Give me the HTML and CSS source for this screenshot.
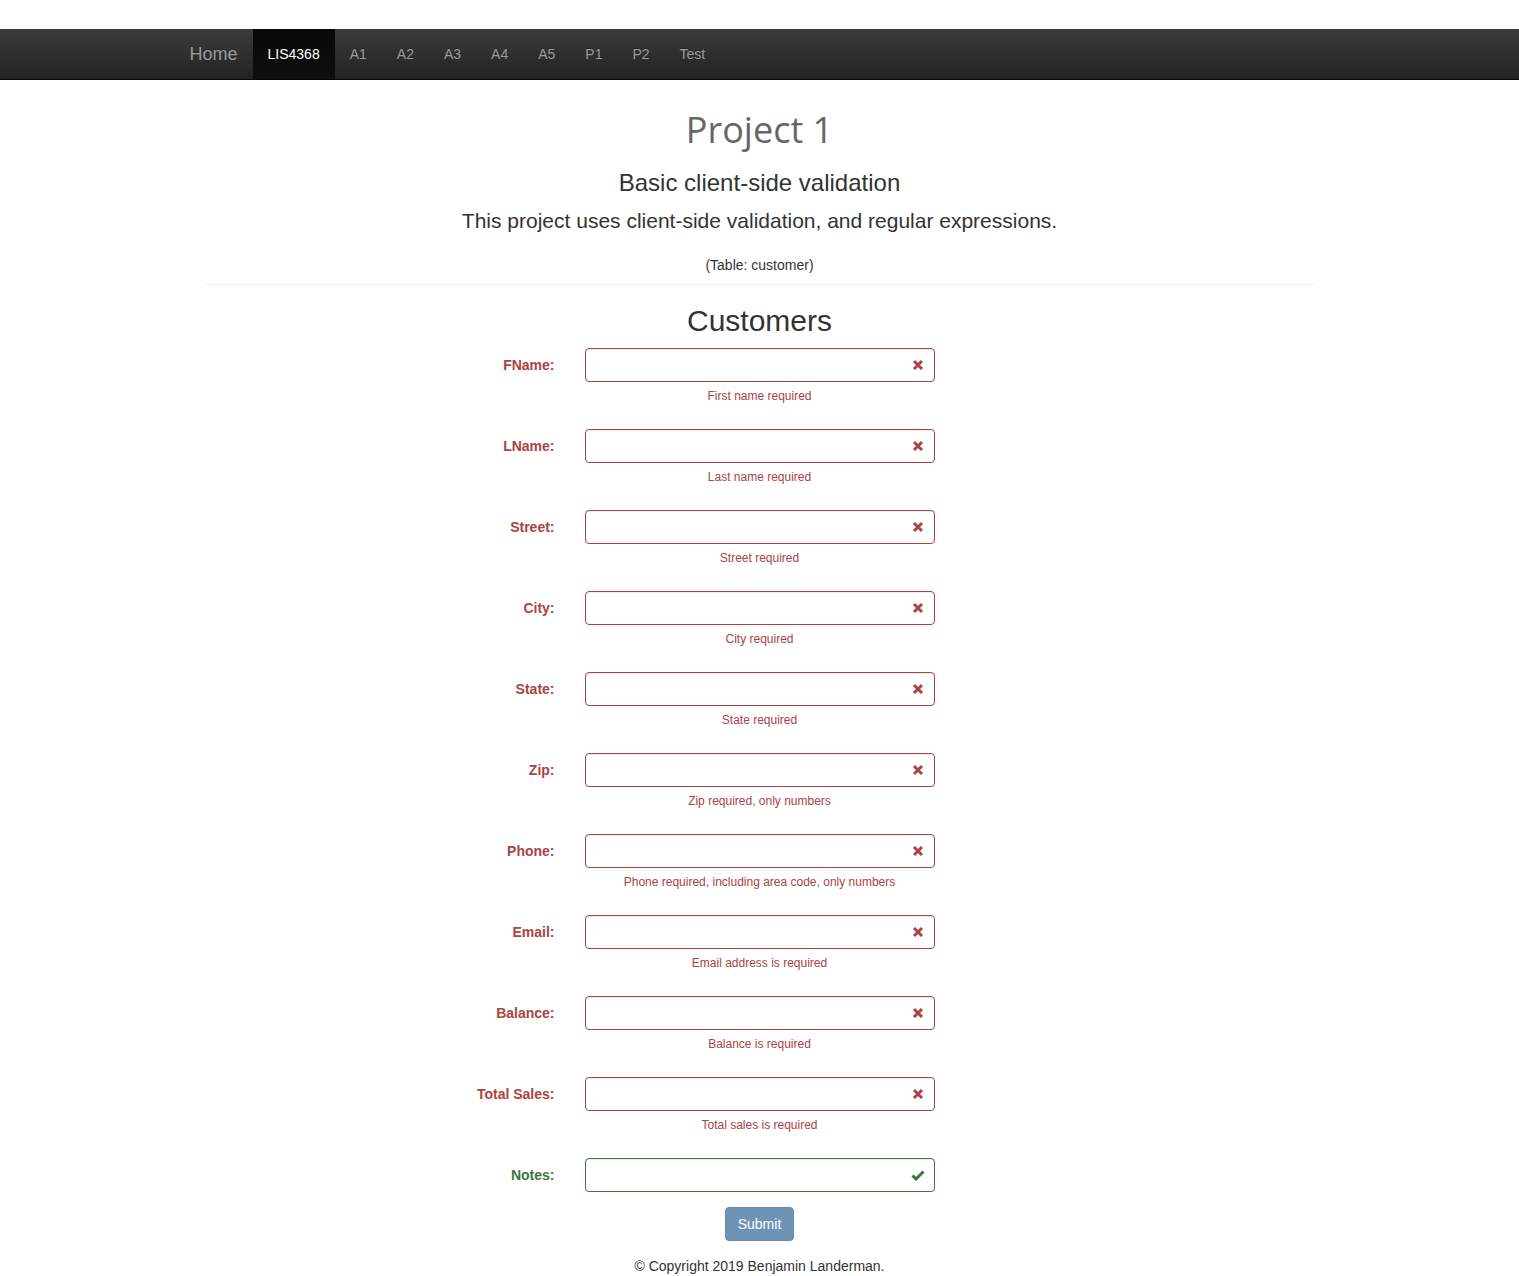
FILE: index.html
```html
<!DOCTYPE html>
<html lang="en">
<head>
<meta charset="utf-8">
<title>Project 1</title>
<link rel="stylesheet" href="styles.css">
</head>
<body>
<div class="topgap"></div>
<nav class="navbar">
  <div class="container nav-inner">
    <a class="brand" href="#">Home</a>
    <ul class="nav">
      <li class="active"><a href="#">LIS4368</a></li>
      <li><a href="#">A1</a></li>
      <li><a href="#">A2</a></li>
      <li><a href="#">A3</a></li>
      <li><a href="#">A4</a></li>
      <li><a href="#">A5</a></li>
      <li><a href="#">P1</a></li>
      <li><a href="#">P2</a></li>
      <li><a href="#">Test</a></li>
    </ul>
  </div>
</nav>

<div class="container">
  <div class="inner">
    <div class="page-header">
      <h1 class="title">Project 1</h1>
      <h3 class="subtitle">Basic client-side validation</h3>
      <p class="lead">This project uses client-side validation, and regular expressions.</p>
      <p class="table-note">(Table: customer)</p>
    </div>

    <h2 class="customers">Customers</h2>

    <form class="form">
      <div class="group error">
        <label class="label">FName:</label>
        <div class="field">
          <div class="control"><input type="text"><span class="icon"><svg viewBox="0 0 12 12" width="12" height="12"><path d="M2 2L10 10M10 2L2 10" stroke="#a94442" stroke-width="3"/></svg></span></div>
          <div class="help">First name required</div>
        </div>
      </div>
      <div class="group error">
        <label class="label">LName:</label>
        <div class="field">
          <div class="control"><input type="text"><span class="icon"><svg viewBox="0 0 12 12" width="12" height="12"><path d="M2 2L10 10M10 2L2 10" stroke="#a94442" stroke-width="3"/></svg></span></div>
          <div class="help">Last name required</div>
        </div>
      </div>
      <div class="group error">
        <label class="label">Street:</label>
        <div class="field">
          <div class="control"><input type="text"><span class="icon"><svg viewBox="0 0 12 12" width="12" height="12"><path d="M2 2L10 10M10 2L2 10" stroke="#a94442" stroke-width="3"/></svg></span></div>
          <div class="help">Street required</div>
        </div>
      </div>
      <div class="group error">
        <label class="label">City:</label>
        <div class="field">
          <div class="control"><input type="text"><span class="icon"><svg viewBox="0 0 12 12" width="12" height="12"><path d="M2 2L10 10M10 2L2 10" stroke="#a94442" stroke-width="3"/></svg></span></div>
          <div class="help">City required</div>
        </div>
      </div>
      <div class="group error">
        <label class="label">State:</label>
        <div class="field">
          <div class="control"><input type="text"><span class="icon"><svg viewBox="0 0 12 12" width="12" height="12"><path d="M2 2L10 10M10 2L2 10" stroke="#a94442" stroke-width="3"/></svg></span></div>
          <div class="help">State required</div>
        </div>
      </div>
      <div class="group error">
        <label class="label">Zip:</label>
        <div class="field">
          <div class="control"><input type="text"><span class="icon"><svg viewBox="0 0 12 12" width="12" height="12"><path d="M2 2L10 10M10 2L2 10" stroke="#a94442" stroke-width="3"/></svg></span></div>
          <div class="help">Zip required, only numbers</div>
        </div>
      </div>
      <div class="group error">
        <label class="label">Phone:</label>
        <div class="field">
          <div class="control"><input type="text"><span class="icon"><svg viewBox="0 0 12 12" width="12" height="12"><path d="M2 2L10 10M10 2L2 10" stroke="#a94442" stroke-width="3"/></svg></span></div>
          <div class="help">Phone required, including area code, only numbers</div>
        </div>
      </div>
      <div class="group error">
        <label class="label">Email:</label>
        <div class="field">
          <div class="control"><input type="text"><span class="icon"><svg viewBox="0 0 12 12" width="12" height="12"><path d="M2 2L10 10M10 2L2 10" stroke="#a94442" stroke-width="3"/></svg></span></div>
          <div class="help">Email address is required</div>
        </div>
      </div>
      <div class="group error">
        <label class="label">Balance:</label>
        <div class="field">
          <div class="control"><input type="text"><span class="icon"><svg viewBox="0 0 12 12" width="12" height="12"><path d="M2 2L10 10M10 2L2 10" stroke="#a94442" stroke-width="3"/></svg></span></div>
          <div class="help">Balance is required</div>
        </div>
      </div>
      <div class="group error">
        <label class="label">Total Sales:</label>
        <div class="field">
          <div class="control"><input type="text"><span class="icon"><svg viewBox="0 0 12 12" width="12" height="12"><path d="M2 2L10 10M10 2L2 10" stroke="#a94442" stroke-width="3"/></svg></span></div>
          <div class="help">Total sales is required</div>
        </div>
      </div>
      <div class="group success last">
        <label class="label">Notes:</label>
        <div class="field">
          <div class="control"><input type="text"><span class="icon"><svg viewBox="0 0 14 12" width="14" height="12"><path d="M1.5 6.5L5 10L12.5 2.5" stroke="#3c763d" stroke-width="3" fill="none"/></svg></span></div>
        </div>
      </div>
      <div class="submit-row">
        <button type="button" class="btn">Submit</button>
      </div>
    </form>

    <footer class="footer">© Copyright 2019 Benjamin Landerman.</footer>
  </div>
</div>
</body>
</html>
```

FILE: styles.css
```css
* { box-sizing: border-box; }
html, body { margin: 0; padding: 0; }
body {
  font-family: "Liberation Sans", Arial, sans-serif;
  font-size: 14px;
  line-height: 1.42857;
  color: #333;
  background: #fff;
}
.topgap { height: 29px; }
.container {
  width: 1170px;
  margin: 0 auto;
  padding: 0 15px;
}
.navbar {
  height: 51px;
  background: linear-gradient(to bottom, #3c3c3c 0%, #222 100%);
  border-bottom: 1px solid #080808;
}
.nav-inner { display: flex; align-items: stretch; height: 50px; }
.brand {
  display: block;
  padding: 15px 15px 15px 0;
  font-size: 18px;
  line-height: 20px;
  color: #9d9d9d;
  text-decoration: none;
  text-shadow: 0 -1px 0 rgba(0,0,0,.25);
}
.nav { list-style: none; margin: 0; padding: 0; display: flex; }
.nav li a {
  display: block;
  padding: 15px;
  line-height: 20px;
  font-size: 14px;
  color: #9d9d9d;
  text-decoration: none;
  text-shadow: 0 -1px 0 rgba(0,0,0,.25);
}
.nav li.active a {
  color: #fff;
  background: linear-gradient(to bottom, #080808 0%, #0f0f0f 100%);
}
.inner { padding: 0 15px; }
.page-header {
  text-align: center;
  border-bottom: 1px solid #eee;
  padding-top: 30px;
  padding-bottom: 9px;
}
.title {
  margin: 0;
  font-family: "Open Sans", "DejaVu Sans", sans-serif;
  font-weight: 400;
  font-size: 36px;
  line-height: 40px;
  color: #666;
}
.subtitle {
  margin: 19px 0 0;
  font-weight: 400;
  font-size: 24px;
  line-height: 28px;
  color: #333;
}
.lead {
  margin: 12px 0 0;
  font-size: 21px;
  line-height: 24px;
  color: #333;
}
.table-note {
  margin: 22px 0 0;
  font-size: 14px;
  line-height: 20px;
}
.customers {
  margin: 19px 0 0;
  text-align: center;
  font-weight: 400;
  font-size: 30px;
  line-height: 34px;
  color: #333;
}
.form { margin: 10px -15px 0; }
.group {
  display: grid;
  grid-template-columns: 380px 380px;
  margin-bottom: 25px;
}
.group.last { margin-bottom: 15px; }
.label {
  padding: 7px 15px 0;
  text-align: right;
  font-weight: 700;
  line-height: 20px;
}
.error .label, .error .help { color: #a94442; }
.success .label { color: #3c763d; }
.field { padding: 0 15px; }
.control { position: relative; }
.control input {
  display: block;
  width: 100%;
  height: 34px;
  padding: 6px 42px 6px 12px;
  font-size: 14px;
  border: 1px solid #ccc;
  border-radius: 4px;
  box-shadow: inset 0 1px 1px rgba(0,0,0,.075);
  background: #fff;
  outline: none;
}
.error .control input { border-color: #a94442; }
.success .control input { border-color: #3c763d; }
.icon {
  position: absolute;
  top: 0;
  right: 0;
  width: 34px;
  height: 34px;
  display: flex;
  align-items: center;
  justify-content: center;
}
.help {
  margin-top: 6px;
  margin-bottom: -1px;
  text-align: center;
  font-size: 12px;
  line-height: 17px;
}
.submit-row { text-align: center; }
.btn {
  display: inline-block;
  height: 34px;
  padding: 6px 12px;
  font-family: "Liberation Sans", Arial, sans-serif;
  font-size: 14px;
  line-height: 20px;
  color: #fff;
  background: #6f93b4;
  border: 1px solid #6a8db0;
  border-radius: 4px;
}
.footer {
  margin-top: 15px;
  text-align: center;
  line-height: 20px;
  color: #333;
}
```
